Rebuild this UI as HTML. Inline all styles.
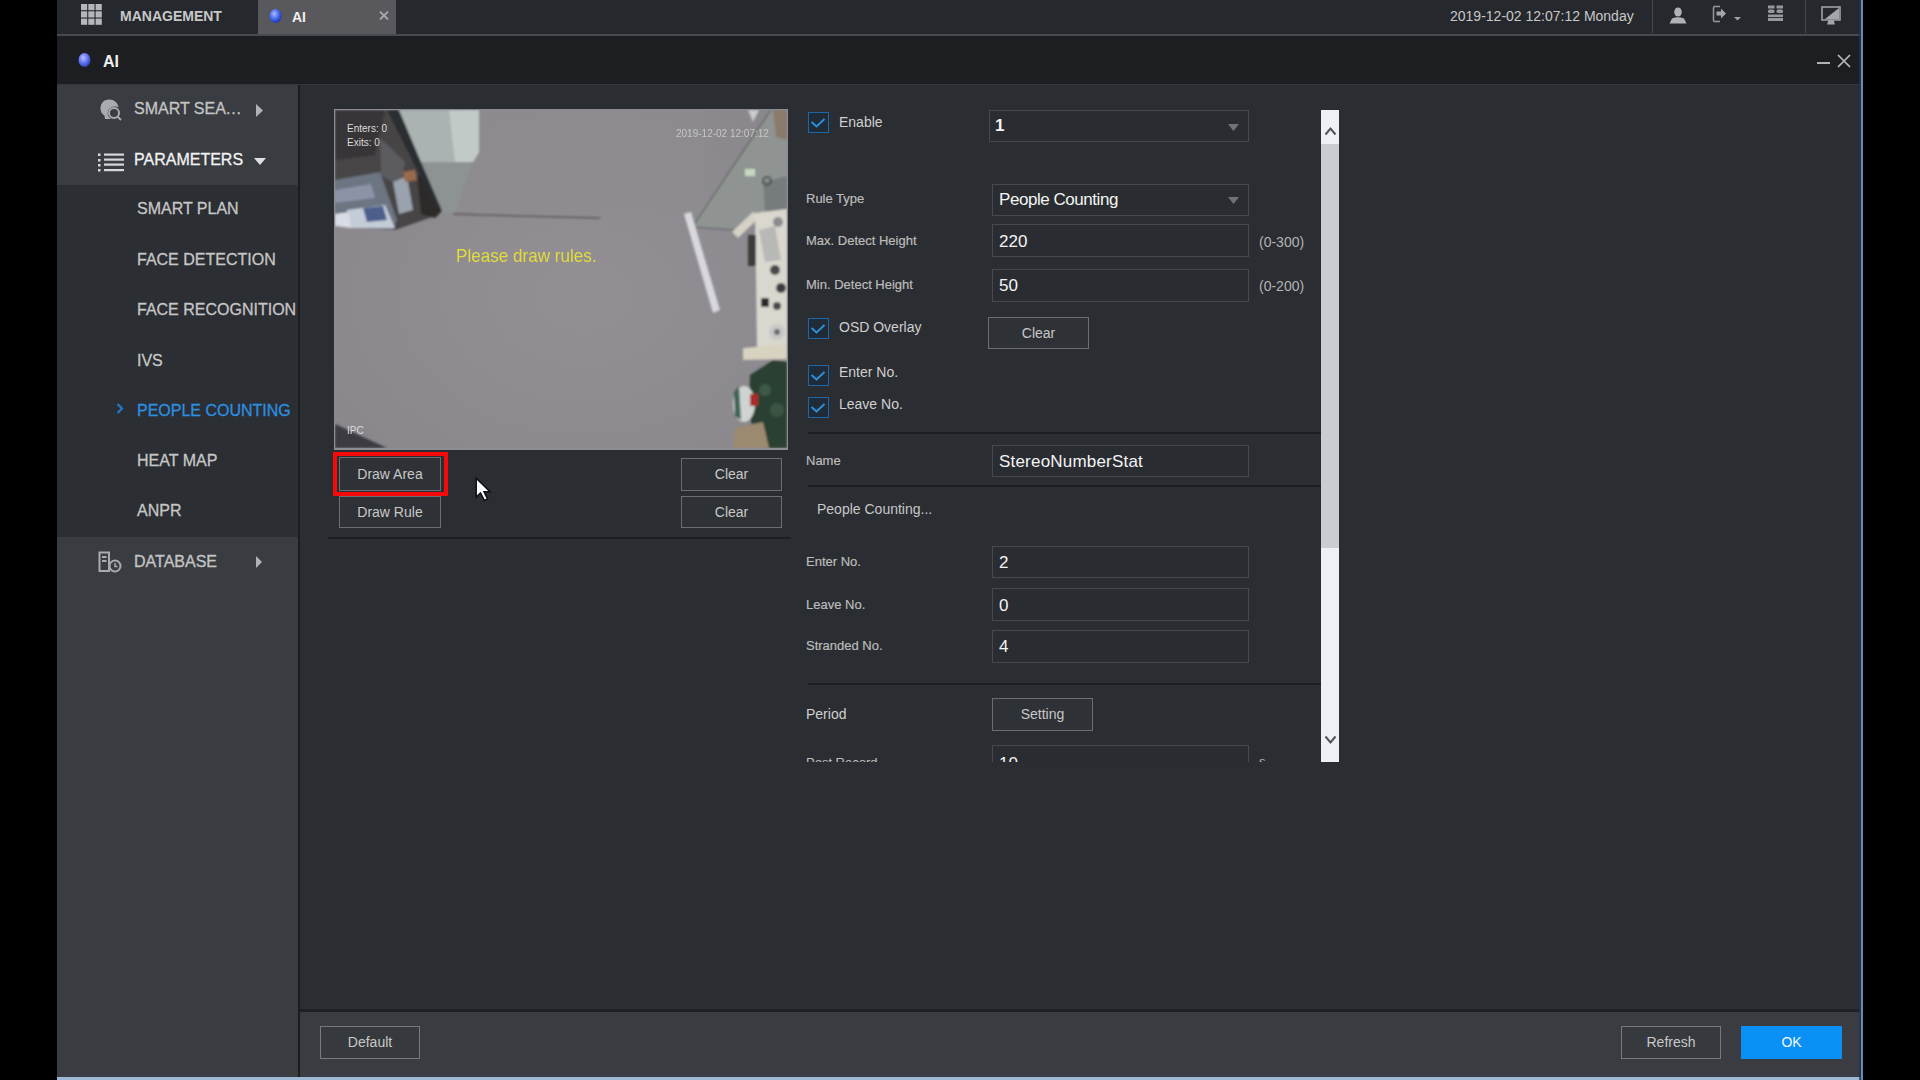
<!DOCTYPE html>
<html><head><meta charset="utf-8">
<style>
*{margin:0;padding:0;box-sizing:border-box}
html,body{width:1920px;height:1080px;overflow:hidden;background:#000;font-family:"Liberation Sans",sans-serif}
.a{position:absolute}
.t{position:absolute;white-space:nowrap;line-height:1}
#top{left:57px;top:0;width:1805px;height:34px;background:#25282d}
#topline{left:57px;top:34px;width:1805px;height:2px;background:#474a4f}
#tab{left:258px;top:0;width:138px;height:34px;background:#58585d}
#title{left:57px;top:36px;width:1805px;height:48px;background:#1c1e21}
#titleline{left:57px;top:84px;width:1805px;height:2px;background:#34373b}
#side{left:57px;top:85px;width:241px;height:992px;background:#393c41}
#sidelow{left:57px;top:185px;width:241px;height:352px;background:#2b2e32}
#sideedge{left:298px;top:85px;width:2px;height:992px;background:#1b1d20}
#content{left:300px;top:85px;width:1562px;height:925px;background:#2a2d31}
#footline{left:300px;top:1009px;width:1562px;height:3px;background:#1e2023}
#foot{left:300px;top:1012px;width:1562px;height:65px;background:#3a3c41}
#bottom{left:57px;top:1077px;width:1805px;height:3px;background:#9db9d6}
#rightedge{left:1859px;top:0;width:4px;height:1080px;background:linear-gradient(90deg,rgba(25,50,75,0.6) 0%,#1d3550 50%,#6990b4 62%,#5f86aa 100%)}
.btn{position:absolute;border:1px solid #6a6d72;background:#2e3135;color:#c8c8c8;font-size:14px;text-align:center}
.inp{position:absolute;border:1px solid #46494d;background:#292c30;color:#f0f0f0;font-size:16px}
.lbl{position:absolute;white-space:nowrap;color:#bcbcbc;font-size:13px;line-height:1;-webkit-text-stroke:0.2px currentColor;margin-top:-1px}
.cb{position:absolute;width:21px;height:21px;border:1.5px solid #1e66a6;background:#1f2c38}
.side1{position:absolute;white-space:nowrap;color:#c6c6c6;font-size:16px;line-height:1;-webkit-text-stroke:0.3px currentColor;margin-top:1px}
.hl{position:absolute;height:2px;background:#1c1e21}
</style></head><body>
<div class="a" id="top"></div>
<div class="a" id="tab"></div>
<div class="a" id="topline"></div>
<div class="a" id="title"></div>
<div class="a" id="titleline"></div>
<div class="a" id="side"></div>
<div class="a" id="sidelow"></div>
<div class="a" id="sideedge"></div>
<div class="a" id="content"></div>
<div class="a" id="footline"></div>
<div class="a" id="foot"></div>
<div class="a" id="bottom"></div>
<div class="a" id="rightedge"></div>

<!-- TOPBAR -->
<div class="t" style="left:120px;top:9px;font-size:14px;font-weight:bold;color:#c8c8c8">MANAGEMENT</div>
<div class="t" style="left:292px;top:10px;font-size:14px;font-weight:bold;color:#f0f0f0">AI</div>
<div class="t" style="left:1450px;top:9px;font-size:14px;color:#c8c8c8">2019-12-02 12:07:12 Monday</div>

<!-- TITLE -->
<div class="t" style="left:103px;top:54px;font-size:16px;font-weight:bold;color:#eeeeee">AI</div>

<!-- SIDEBAR -->
<div class="side1" style="left:134px;top:100px;color:#c4c4c4">SMART SEA<span style="letter-spacing:0.8px">...</span></div>
<div class="side1" style="left:134px;top:151px;color:#f2f2f2">PARAMETERS</div>
<div class="side1" style="left:137px;top:200px">SMART PLAN</div>
<div class="side1" style="left:137px;top:251px">FACE DETECTION</div>
<div class="side1" style="left:137px;top:301px">FACE RECOGNITION</div>
<div class="side1" style="left:137px;top:352px">IVS</div>
<div class="side1" style="left:137px;top:402px;color:#2c8fe0">PEOPLE COUNTING</div>
<div class="side1" style="left:137px;top:452px">HEAT MAP</div>
<div class="side1" style="left:137px;top:502px">ANPR</div>
<div class="side1" style="left:134px;top:553px;color:#c4c4c4">DATABASE</div>


<!-- CAMERA -->
<div class="a" style="left:334px;top:109px;width:454px;height:341px;background:#8a8e92"></div>
<svg class="a" style="left:335px;top:110px" width="452" height="338" viewBox="0 0 452 338">
<defs>
<radialGradient id="fl" cx="0.55" cy="0.55" r="0.8"><stop offset="0" stop-color="#938f95"/><stop offset="1" stop-color="#88868b"/></radialGradient>
<filter id="bl" x="-10%" y="-10%" width="120%" height="120%"><feGaussianBlur stdDeviation="0.8"/></filter>
</defs>
<rect x="0" y="0" width="452" height="338" fill="url(#fl)"/>
<g filter="url(#bl)">
<rect x="140" y="0" width="230" height="105" fill="#908e90" opacity="0.5"/>
<!-- dark top-left equipment region -->
<polygon points="0,0 53,0 110,96 100,106 60,120 0,116" fill="#464445"/>
<polygon points="0,0 50,0 40,45 0,50" fill="#393637"/>
<polygon points="45,28 70,52 66,76 46,66" fill="#5c5b60"/>
<polygon points="0,70 45,62 62,110 58,120 0,116" fill="#6c7482"/>
<polygon points="0,80 36,74 40,88 0,93" fill="#8a94a6"/>
<polygon points="12,100 50,95 60,118 14,118" fill="#c4ccd8"/>
<polygon points="28,98 48,96 52,110 32,112" fill="#4b5f8a"/>
<polygon points="0,104 14,102 16,118 0,116" fill="#d8dce4"/>
<!-- person/bag -->
<polygon points="58,72 72,66 78,100 64,104" fill="#9aa2ae"/>
<polygon points="68,62 80,60 82,70 70,72" fill="#9a6a50"/>
<polygon points="82,66 98,62 112,96 100,108 86,104" fill="#2e2a2a"/>
<!-- pole -->
<polygon points="52,0 64,0 111,94 101,98" fill="#2c2d30"/>
<!-- glass lower -->
<polygon points="86,52 138,52 120,103 108,103" fill="#8d9393"/>
<!-- glass pane -->
<polygon points="64,0 144,0 144,42 138,52 86,52" fill="#aab3b1"/>
<polygon points="114,0 144,0 144,42 138,52 120,52" fill="#c2cac8"/>
<!-- floor edge -->
<line x1="118" y1="104" x2="265" y2="108" stroke="#5c585a" stroke-width="1.5"/>
<!-- right glass partition -->
<polygon points="436,0 452,0 452,100 418,103 400,120 358,117" fill="#8f9493"/>
<polygon points="428,72 452,66 452,100 430,103" fill="#767c7e"/>
<polygon points="413,0 424,0 418,12" fill="#c8cccc"/>
<polygon points="438,0 452,0 452,30 441,27" fill="#8a7a6c"/>
<line x1="436" y1="0" x2="358" y2="116" stroke="#5a605e" stroke-width="1.2"/>
<line x1="358" y1="117" x2="400" y2="120" stroke="#5a605e" stroke-width="1.2"/>
<rect x="410" y="59" width="10" height="7" fill="#c8d8c0"/>
<circle cx="432" cy="71" r="4" fill="none" stroke="#4c5254" stroke-width="2"/>
<!-- fluorescent tube -->
<polygon points="349,104 356,102 385,200 378,203" fill="#d8d8de"/>
<!-- white shelf -->
<polygon points="397,122 418,102 426,106 403,128" fill="#d6d2c6"/>
<polygon points="420,103 452,99 452,238 422,238" fill="#dad7ce"/>
<rect x="413" y="125" width="8" height="31" fill="#3c3a3a"/>
<polygon points="424,120 440,116 446,150 430,152" fill="#b8b8b6"/>
<circle cx="443" cy="112" r="5" fill="#8a8c90"/>
<circle cx="440" cy="160" r="5" fill="#4a4a4c"/>
<circle cx="446" cy="178" r="5" fill="#3c3c3e"/>
<circle cx="442" cy="196" r="4" fill="#4a4a4c"/>
<rect x="426" y="188" width="8" height="9" fill="#2a2a2a"/>
<circle cx="442" cy="222" r="8" fill="#c8c8c8"/>
<circle cx="442" cy="222" r="3" fill="#6a6a6a"/>
<polygon points="408,238 452,234 452,249 408,250" fill="#d8d2c0"/>
<!-- plant -->
<polygon points="415,265 438,250 452,252 452,338 424,338 414,305" fill="#2b4132"/>
<circle cx="430" cy="280" r="6" fill="#3e5a48"/>
<circle cx="442" cy="300" r="7" fill="#3a5444"/>
<ellipse cx="409" cy="294" rx="11" ry="18" fill="#cfd4d2"/>
<polygon points="399,282 404,276 406,310 400,306" fill="#3c6452"/>
<rect x="415" y="284" width="8" height="12" fill="#a82a2a"/>
<polygon points="398,338 400,318 428,312 434,338" fill="#9c8a70"/>
<!-- bottom-left dark wedge -->
<polygon points="0,314 52,338 0,338" fill="#3c3b42"/>
</g>
<!-- osd text -->
<text x="12" y="22" font-family="Liberation Sans" font-size="10" fill="#dcdcdc">Enters: 0</text>
<text x="12" y="36" font-family="Liberation Sans" font-size="10" fill="#dcdcdc">Exits: 0</text>
<text x="341" y="27" font-family="Liberation Sans" font-size="10" fill="#d0d0d0" opacity="0.85">2019-12-02 12:07:12</text>
<text x="12" y="324" font-family="Liberation Sans" font-size="10" fill="#dcdcdc">IPC</text>
</svg>
<div class="t" style="left:456px;top:246px;font-size:19px;color:#e2dc3a;transform:scaleX(0.9);transform-origin:0 0">Please draw rules.</div>
<div class="a" style="left:333px;top:452px;width:115px;height:44px;border:4px solid #f50a0a"></div>
<div class="btn" style="left:339px;top:457px;width:102px;height:34px;line-height:32px">Draw Area</div>
<div class="btn" style="left:339px;top:496px;width:102px;height:32px;line-height:30px">Draw Rule</div>
<div class="btn" style="left:681px;top:458px;width:101px;height:33px;line-height:31px">Clear</div>
<div class="btn" style="left:681px;top:496px;width:101px;height:32px;line-height:30px">Clear</div>
<div class="hl" style="left:328px;top:537px;width:463px"></div>

<!-- FORM -->
<div class="cb" style="left:808px;top:112px"><svg width="17" height="17" viewBox="0 0 17 17" style="position:absolute;left:0;top:0"><polyline points="2.5,9 7.5,13.5 15.5,6" fill="none" stroke="#2c92dc" stroke-width="1.8"/></svg></div>
<div class="t" style="left:839px;top:115px;font-size:14px;color:#d0d0d0">Enable</div>
<div class="inp" style="left:989px;top:110px;width:260px;height:32px"></div>
<div class="t" style="left:995px;top:117px;font-size:17px;font-weight:bold;color:#f4f4f4">1</div>
<svg class="a" style="left:1228px;top:124px" width="11" height="7" viewBox="0 0 11 7"><polygon points="0,0 11,0 5.5,7" fill="#6f7277"/></svg>
<div class="lbl" style="left:806px;top:193px">Rule Type</div>
<div class="inp" style="left:992px;top:184px;width:257px;height:32px"></div>
<div class="t" style="left:999px;top:191px;font-size:17px;letter-spacing:-0.45px;color:#f4f4f4">People Counting</div>
<svg class="a" style="left:1228px;top:197px" width="11" height="7" viewBox="0 0 11 7"><polygon points="0,0 11,0 5.5,7" fill="#6f7277"/></svg>
<div class="lbl" style="left:806px;top:235px">Max. Detect Height</div>
<div class="inp" style="left:992px;top:224px;width:257px;height:33px"></div>
<div class="t" style="left:999px;top:233px;font-size:17px;color:#f4f4f4">220</div>
<div class="t" style="left:1259px;top:235px;font-size:14px;color:#b4b4b4">(0-300)</div>
<div class="lbl" style="left:806px;top:279px">Min. Detect Height</div>
<div class="inp" style="left:992px;top:269px;width:257px;height:33px"></div>
<div class="t" style="left:999px;top:277px;font-size:17px;color:#f4f4f4">50</div>
<div class="t" style="left:1259px;top:279px;font-size:14px;color:#b4b4b4">(0-200)</div>
<div class="cb" style="left:808px;top:318px"><svg width="17" height="17" viewBox="0 0 17 17" style="position:absolute;left:0;top:0"><polyline points="2.5,9 7.5,13.5 15.5,6" fill="none" stroke="#2c92dc" stroke-width="1.8"/></svg></div>
<div class="t" style="left:839px;top:320px;font-size:14px;color:#d0d0d0">OSD Overlay</div>
<div class="btn" style="left:988px;top:317px;width:101px;height:32px;line-height:30px">Clear</div>
<div class="cb" style="left:808px;top:365px"><svg width="17" height="17" viewBox="0 0 17 17" style="position:absolute;left:0;top:0"><polyline points="2.5,9 7.5,13.5 15.5,6" fill="none" stroke="#2c92dc" stroke-width="1.8"/></svg></div>
<div class="t" style="left:839px;top:365px;font-size:14px;color:#d0d0d0">Enter No.</div>
<div class="cb" style="left:808px;top:397px"><svg width="17" height="17" viewBox="0 0 17 17" style="position:absolute;left:0;top:0"><polyline points="2.5,9 7.5,13.5 15.5,6" fill="none" stroke="#2c92dc" stroke-width="1.8"/></svg></div>
<div class="t" style="left:839px;top:397px;font-size:14px;color:#d0d0d0">Leave No.</div>
<div class="hl" style="left:808px;top:432px;width:513px"></div>
<div class="lbl" style="left:806px;top:455px">Name</div>
<div class="inp" style="left:992px;top:445px;width:257px;height:32px"></div>
<div class="t" style="left:999px;top:453px;font-size:17px;letter-spacing:0.2px;color:#f4f4f4">StereoNumberStat</div>
<div class="hl" style="left:808px;top:485px;width:513px"></div>
<div class="t" style="left:817px;top:502px;font-size:14px;color:#c8c8c8">People Counting...</div>
<div class="lbl" style="left:806px;top:556px">Enter No.</div>
<div class="inp" style="left:992px;top:546px;width:257px;height:32px"></div>
<div class="t" style="left:999px;top:554px;font-size:17px;color:#f4f4f4">2</div>
<div class="lbl" style="left:806px;top:599px">Leave No.</div>
<div class="inp" style="left:992px;top:588px;width:257px;height:33px"></div>
<div class="t" style="left:999px;top:597px;font-size:17px;color:#f4f4f4">0</div>
<div class="lbl" style="left:806px;top:640px">Stranded No.</div>
<div class="inp" style="left:992px;top:630px;width:257px;height:33px"></div>
<div class="t" style="left:999px;top:638px;font-size:17px;color:#f4f4f4">4</div>
<div class="hl" style="left:808px;top:683px;width:513px"></div>
<div class="t" style="left:806px;top:707px;font-size:14px;color:#d0d0d0">Period</div>
<div class="btn" style="left:992px;top:698px;width:101px;height:33px;line-height:31px">Setting</div>
<div class="a" style="left:800px;top:740px;width:520px;height:22px;overflow:hidden">
 <div class="t" style="left:6px;top:16px;font-size:13px;color:#c0c0c0">Post Record</div>
 <div class="inp" style="left:192px;top:5px;width:257px;height:33px"></div>
 <div class="t" style="left:199px;top:15px;font-size:17px;color:#f4f4f4">10</div>
 <div class="t" style="left:459px;top:15px;font-size:13px;color:#b8b8b8">s</div>
</div>
<!-- SCROLLBAR -->
<div class="a" style="left:1321px;top:110px;width:18px;height:652px;background:#eef0f4"></div>
<div class="a" style="left:1321px;top:144px;width:18px;height:404px;background:#c9ccd1"></div>
<svg class="a" style="left:1324px;top:126px" width="13" height="10" viewBox="0 0 13 10"><polyline points="1.5,8.5 6.5,2.5 11.5,8.5" fill="none" stroke="#505358" stroke-width="2"/></svg>
<svg class="a" style="left:1324px;top:735px" width="13" height="10" viewBox="0 0 13 10"><polyline points="1.5,1.5 6.5,7.5 11.5,1.5" fill="none" stroke="#505358" stroke-width="2"/></svg>
<!-- FOOTER -->
<div class="btn" style="left:320px;top:1026px;width:100px;height:33px;line-height:31px;background:#36393d;border-color:#76797e">Default</div>
<div class="btn" style="left:1621px;top:1026px;width:100px;height:33px;line-height:31px;background:#36393d;border-color:#76797e">Refresh</div>
<div class="a" style="left:1741px;top:1026px;width:101px;height:33px;line-height:33px;background:#0a8ff5;color:#f4f8ff;font-size:14px;text-align:center">OK</div>

<!-- ICONS TOPBAR -->
<svg class="a" style="left:81px;top:4px" width="21" height="21" viewBox="0 0 21 21" fill="#b4b6ba">
<rect x="0" y="0" width="6.2" height="6.2"/><rect x="7.3" y="0" width="6.2" height="6.2"/><rect x="14.6" y="0" width="6.2" height="6.2"/>
<rect x="0" y="7.3" width="6.2" height="6.2"/><rect x="7.3" y="7.3" width="6.2" height="6.2"/><rect x="14.6" y="7.3" width="6.2" height="6.2"/>
<rect x="0" y="14.6" width="6.2" height="6.2"/><rect x="7.3" y="14.6" width="6.2" height="6.2"/><rect x="14.6" y="14.6" width="6.2" height="6.2"/>
</svg>
<svg class="a" style="left:268px;top:8px" width="15" height="16" viewBox="0 0 15 16">
<defs><radialGradient id="g1" cx="0.4" cy="0.35" r="0.7"><stop offset="0" stop-color="#a8b8ff"/><stop offset="0.6" stop-color="#3b62e8"/><stop offset="1" stop-color="#1a2fa8"/></radialGradient></defs>
<ellipse cx="7.5" cy="8" rx="6" ry="7" fill="url(#g1)"/>
</svg>
<svg class="a" style="left:379px;top:11px" width="10" height="9" viewBox="0 0 10 9"><path d="M1,0.5 L9,8.5 M9,0.5 L1,8.5" stroke="#a9a9ad" stroke-width="1.8"/></svg>
<div class="a" style="left:1652px;top:0;width:1px;height:33px;background:#45484c"></div>
<div class="a" style="left:1805px;top:0;width:1px;height:33px;background:#45484c"></div>
<svg class="a" style="left:1669px;top:7px" width="18" height="17" viewBox="0 0 18 17" fill="#b0b2b6">
<ellipse cx="9" cy="5" rx="3.8" ry="4.6"/><path d="M0.5,16.5 L3,11.5 Q9,9 15,11.5 L17.5,16.5 Z"/>
</svg>
<svg class="a" style="left:1712px;top:5px" width="32" height="18" viewBox="0 0 32 18">
<path d="M8,1.5 L2.5,1.5 Q1.5,1.5 1.5,2.5 L1.5,15.5 Q1.5,16.5 2.5,16.5 L8,16.5" fill="none" stroke="#96989e" stroke-width="1.5"/>
<path d="M4.5,6.5 L9,6.5 L9,3.5 L14,8.5 L9,13.5 L9,10.5 L4.5,10.5 Z" fill="#a4a6ac"/>
<polygon points="22,12 29,12 25.5,15.5" fill="#a0a2a8"/>
</svg>
<svg class="a" style="left:1767px;top:5px" width="17" height="17" viewBox="0 0 17 17" fill="#96989e">
<rect x="1" y="0.5" width="6.5" height="3"/><rect x="9.5" y="0.5" width="6.5" height="3"/>
<rect x="1" y="4.5" width="6.5" height="3.5" rx="1.5"/><rect x="9.5" y="4.5" width="6.5" height="3.5" rx="1.5"/>
<rect x="1" y="9.5" width="15" height="2.6"/><rect x="1" y="13" width="15" height="3"/>
</svg>
<svg class="a" style="left:1821px;top:6px" width="20" height="19" viewBox="0 0 20 19">
<rect x="1" y="1" width="18" height="13" fill="none" stroke="#a4a6aa" stroke-width="1.5"/>
<polygon points="18,2 18,13 4,13" fill="#a4a6aa"/>
<polygon points="7.5,14 12.5,14 14,18.5 6,18.5" fill="#a4a6aa"/>
</svg>
<!-- TITLE ICONS -->
<svg class="a" style="left:77px;top:52px" width="15" height="16" viewBox="0 0 15 16">
<defs><radialGradient id="g2" cx="0.4" cy="0.35" r="0.7"><stop offset="0" stop-color="#b8c0ff"/><stop offset="0.6" stop-color="#5a6af0"/><stop offset="1" stop-color="#2a3aa0"/></radialGradient></defs>
<ellipse cx="7.5" cy="8" rx="6" ry="7" fill="url(#g2)"/>
</svg>
<div class="a" style="left:1817px;top:62px;width:13px;height:2px;background:#b0b2b6"></div>
<svg class="a" style="left:1837px;top:54px" width="14" height="14" viewBox="0 0 14 14"><path d="M1,1 L13,13 M13,1 L1,13" stroke="#b8babe" stroke-width="1.7"/></svg>
<!-- SIDEBAR ICONS -->
<svg class="a" style="left:99px;top:98px" width="24" height="24" viewBox="0 0 24 24">
<path d="M10,1.5 C4.5,1.5 1.5,5.5 1.5,10.5 C1.5,14 3.5,16.5 5.5,17.5 L6,21 L12,21 C9,19 8,16 9,13 C10,10 13,8.5 16,8.5 C17.5,8.5 18.5,9 19.5,9.5 C19,4.5 15,1.5 10,1.5 Z" fill="#a9abaf"/>
<circle cx="15" cy="15" r="5" fill="none" stroke="#a9abaf" stroke-width="2"/>
<path d="M18.5,18.5 L22,22" stroke="#a9abaf" stroke-width="2"/>
</svg>
<svg class="a" style="left:255px;top:104px" width="9" height="13" viewBox="0 0 9 13"><polygon points="1,0 8,6.5 1,13" fill="#b0b2b6"/></svg>
<svg class="a" style="left:98px;top:153px" width="27" height="19" viewBox="0 0 27 19" fill="#d8d8da">
<rect x="0" y="0.5" width="2.5" height="2.5"/><rect x="0" y="6" width="2.5" height="2.5"/><rect x="0" y="11" width="2.5" height="2.5"/><rect x="0" y="16" width="2.5" height="2.5"/>
<rect x="6" y="0.5" width="20" height="2.2"/><rect x="6" y="5.5" width="20" height="2.2"/><rect x="6" y="10.5" width="20" height="2.2"/><rect x="6" y="16" width="20" height="2.2"/>
</svg>
<svg class="a" style="left:254px;top:157px" width="12" height="8" viewBox="0 0 12 8"><polygon points="0,1 12,1 6,8" fill="#e0e0e2"/></svg>
<svg class="a" style="left:116px;top:403px" width="8" height="11" viewBox="0 0 8 11"><polyline points="1.5,1 6,5.5 1.5,10" fill="none" stroke="#2479c8" stroke-width="2.2"/></svg>
<svg class="a" style="left:98px;top:551px" width="24" height="22" viewBox="0 0 24 22">
<path d="M1.5,1.5 L11,1.5 L11,20 L1.5,20 Z" fill="none" stroke="#a9abaf" stroke-width="2"/>
<rect x="4" y="5" width="4.5" height="2" fill="#a9abaf"/><rect x="4" y="9" width="4.5" height="2" fill="#a9abaf"/>
<circle cx="17" cy="15" r="5.5" fill="none" stroke="#a9abaf" stroke-width="2"/>
<path d="M17,12 L17,15.5 L19.5,15.5" fill="none" stroke="#a9abaf" stroke-width="1.5"/>
</svg>
<svg class="a" style="left:255px;top:556px" width="8" height="12" viewBox="0 0 8 12"><polygon points="1,0 7,6 1,12" fill="#b0b2b6"/></svg>
<!-- CURSOR -->
<svg class="a" style="left:475px;top:477px" width="17" height="25" viewBox="0 0 17 25">
<path d="M1.2,1.2 L1.2,20 L5.5,16 L9.5,23.5 L12.5,22 L9,14.8 L15,14.8 Z" fill="#fafcff" stroke="#0d0f12" stroke-width="1.5" stroke-linejoin="miter"/>
</svg>
</body></html>
